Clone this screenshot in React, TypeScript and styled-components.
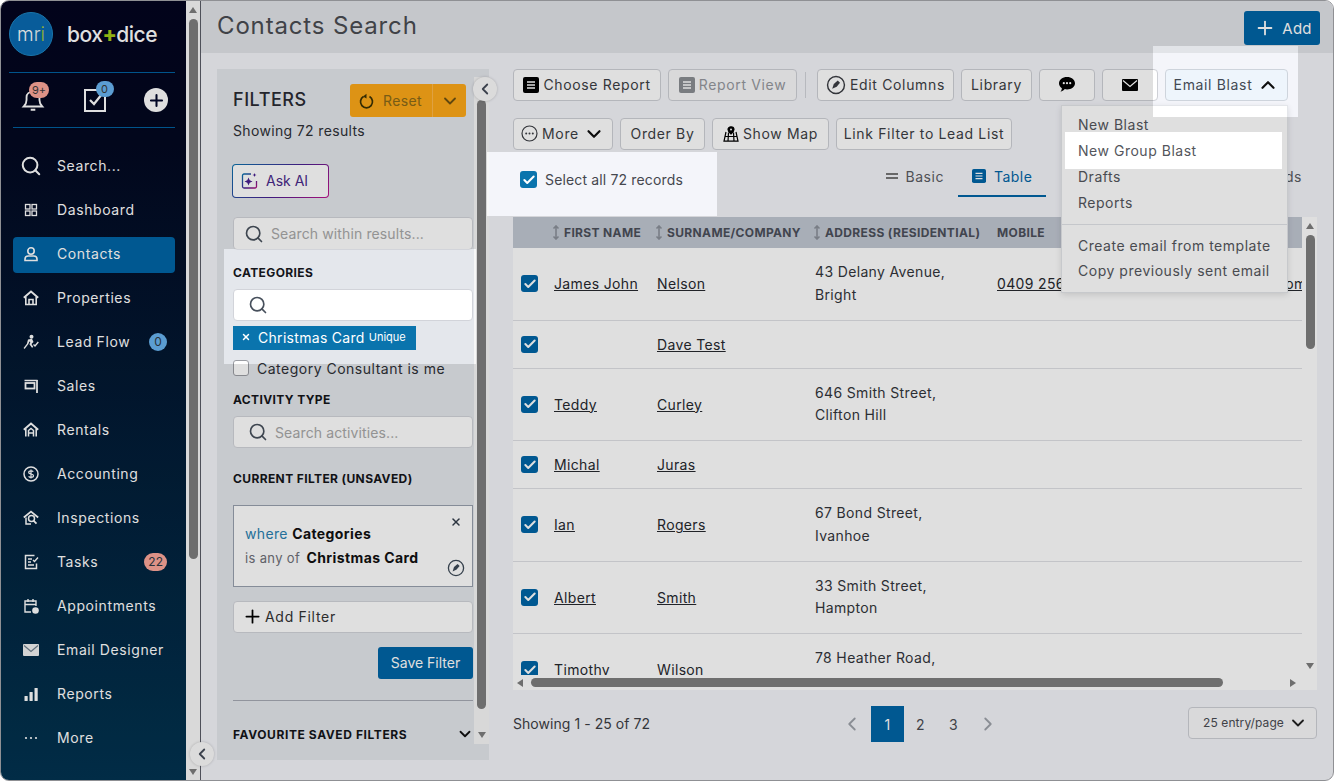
import React from 'react'
import styled, { createGlobalStyle } from 'styled-components'
import { Check, ChevronDown, ChevronLeft, ChevronRight, ChevronUp, Plus, Search, X } from 'lucide-react'

const PRIMARY = '#0165a6'
const TEXT = '#3c3e44'

const GlobalStyle = createGlobalStyle`
    html, body {
        margin: 0;
        padding: 0;
        background: #ffffff;
    }
    * {
        box-sizing: border-box;
    }
    body {
        font-family: Inter, "Open Sans", "Liberation Sans", sans-serif;
        font-size: 14px;
        letter-spacing: 0.35px;
        color: ${TEXT};
    }
`

type IconProps = { size?: number }

const ReportIcon = ({ size = 16, color = '#000' }: IconProps & { color?: string }) => (
    <svg width={size} height={size} viewBox="0 0 16 16">
        <rect width="16" height="16" rx="2" fill={color} />
        <path d="M4 5h8M4 8h8M4 11h8" stroke="#fff" strokeWidth="1.4" />
    </svg>
)

const EditCircleIcon = ({ size = 20 }: IconProps) => (
    <svg width={size} height={size} viewBox="0 0 18 18" fill="none" stroke="currentColor">
        <circle cx="9" cy="9" r="7.6" strokeWidth="1.3" />
        <path d="M5.6 12.4 7 8l3.6-3 2 2-3 3.6z" fill="currentColor" stroke="none" />
    </svg>
)

const ChatIcon = () => (
    <svg width="16" height="15" viewBox="0 0 16 15">
        <path d="M8 0c4.4 0 8 2.7 8 6.2s-3.6 6.2-8 6.2c-.8 0-1.500-.1-2.200-.3C4.600 13.300 3 14.500 1.500 14.700c.8-1 1.300-2.100 1.400-3.500C1.100 10 0 8.200 0 6.200 0 2.700 3.600 0 8 0z" fill="#000" />
        <circle cx="4.800" cy="6.200" r="1.100" fill="#fff" />
        <circle cx="8" cy="6.200" r="1.100" fill="#fff" />
        <circle cx="11.200" cy="6.200" r="1.100" fill="#fff" />
    </svg>
)

const MailIcon = ({ color = '#000', stroke = '#fff' }: { color?: string; stroke?: string }) => (
    <svg width="16" height="12" viewBox="0 0 16 12">
        <rect width="16" height="12" rx="1" fill={color} />
        <path d="M1 1.500 8 7.500l7-6" fill="none" stroke={stroke} strokeWidth="1.200" />
    </svg>
)

const MoreCircleIcon = () => (
    <svg width="17" height="17" viewBox="0 0 17 17" fill="none" stroke="currentColor">
        <circle cx="8.500" cy="8.500" r="7.500" strokeWidth="1.200" />
        <circle cx="5.200" cy="8.500" r="1" fill="currentColor" stroke="none" />
        <circle cx="8.500" cy="8.500" r="1" fill="currentColor" stroke="none" />
        <circle cx="11.800" cy="8.500" r="1" fill="currentColor" stroke="none" />
    </svg>
)

const MapIcon = () => (
    <svg width="16" height="16" viewBox="0 0 16 16" fill="none" stroke="#000" strokeWidth="1.200">
        <path d="M8 .8c1.800 0 3 1.200 3 2.800C11 5.400 8 8 8 8S5 5.400 5 3.600C5 2 6.200.8 8 .8z" fill="#000" />
        <circle cx="8" cy="3.500" r="1" fill="#fff" stroke="none" />
        <path d="M3 6 1 15.200h14L13 6M1.800 10.500h12.400M5.500 6.500 5 15.200M10.500 6.500l.5 8.700" />
    </svg>
)

const ResetIcon = () => (
    <svg width="15" height="16" viewBox="0 0 15 16" fill="none" stroke="#3c3204" strokeWidth="1.700">
        <path d="M4.500 3.600a6 6 0 1 0 6 0" />
        <path d="M7.500 0.800v4.600L4 3.400z" fill="#3c3204" stroke="none" />
    </svg>
)

const AiIcon = () => (
    <svg width="17" height="17" viewBox="0 0 17 17" fill="none">
        <defs>
            <linearGradient id="aiStroke" x1="0" y1="0" x2="1" y2="1">
                <stop offset="0" stopColor="#0a74ad" />
                <stop offset="0.6" stopColor="#4a1f8f" />
                <stop offset="1" stopColor="#b01280" />
            </linearGradient>
        </defs>
        <path d="M10 2H3a1.500 1.500 0 0 0-1.500 1.500v11A1.500 1.500 0 0 0 3 16h11a1.500 1.500 0 0 0 1.500-1.500V9" stroke="url(#aiStroke)" strokeWidth="1.300" />
        <path d="M7.500 5.500 8.700 8.300l2.800 1.200-2.800 1.200-1.200 2.800-1.200-2.800-2.800-1.200 2.800-1.200z" fill="#4a1f8f" />
        <path d="M13.500 1l.6 1.400 1.400.6-1.400.6-.6 1.400-.6-1.400-1.400-.6 1.400-.6z" fill="#4a1f8f" />
    </svg>
)

const SortIcon = () => (
    <svg width="8" height="15" viewBox="0 0 8 15" fill="none" stroke="#8b909a" strokeWidth="1.600">
        <path d="M4 1v13M1.500 3.500 4 1l2.500 2.500M1.500 11.500 4 14l2.500-2.500" />
    </svg>
)

const Glyph = ({ children }: { children: React.ReactNode }) => (
    <svg width="16" height="16" viewBox="0 0 16 16" fill="none" stroke="currentColor" strokeWidth="1.300">
        {children}
    </svg>
)

const navIcons: Record<string, React.ReactNode> = {
    dashboard: (
        <Glyph>
            <rect x="2.500" y="2.500" width="4.500" height="4.500" />
            <rect x="9" y="2.500" width="4.500" height="4.500" />
            <rect x="2.500" y="9" width="4.500" height="4.500" />
            <rect x="9" y="9" width="4.500" height="4.500" />
        </Glyph>
    ),
    contacts: (
        <Glyph>
            <circle cx="8" cy="5" r="3.200" strokeWidth="1.600" />
            <path d="M2 14.500v-1.500c0-1.800 1.500-3 3.200-3h5.600c1.700 0 3.200 1.200 3.200 3v1.500z" strokeWidth="1.600" />
        </Glyph>
    ),
    properties: (
        <Glyph>
            <path d="M.8 7.800 8 1.500l7.200 6.300" strokeWidth="1.900" />
            <path d="M2.800 6.800v7.700h10.400V6.800" strokeWidth="1.600" />
            <path d="M6 14.500V9.500h4v5" strokeWidth="1.600" />
        </Glyph>
    ),
    leadflow: (
        <svg width="16" height="16" viewBox="0 0 16 16" fill="currentColor">
            <circle cx="8.500" cy="2.800" r="2" />
            <path d="M5 5.500l4-.8 1.500 3.300-2 2 1.800 3-1.300.8-2.600-3.600 1-2.200-1-.5-1 2.500-3.800 5-1-1 3.300-4.300z" />
            <path d="M10.500 10.500 12 12l3.300-4" fill="none" stroke="currentColor" strokeWidth="1.400" />
        </svg>
    ),
    sales: (
        <svg width="16" height="16" viewBox="0 0 16 16" fill="none" stroke="currentColor">
            <path d="M1.500 2.500h13" strokeWidth="1.500" />
            <rect x="2.500" y="5" width="9" height="5.500" strokeWidth="1.800" />
            <path d="M14 2v13" strokeWidth="1.800" />
        </svg>
    ),
    rentals: (
        <Glyph>
            <path d="M.8 7.800 8 1.500l7.200 6.300" strokeWidth="1.900" />
            <path d="M2.800 6.800v7.700M13.200 6.800v7.700" strokeWidth="1.600" />
            <path d="M5.500 14.500V8.500L8 6.500l2.500 2v6M5.500 11h5" strokeWidth="1.500" />
        </Glyph>
    ),
    accounting: (
        <svg width="16" height="16" viewBox="0 0 16 16" fill="none" stroke="currentColor">
            <circle cx="8" cy="8" r="7" strokeWidth="1.500" />
            <path d="M10.300 5.700C9.800 5 9 4.800 8 4.800c-1.300 0-2.300.6-2.300 1.600C5.700 8.800 10.500 7.200 10.500 9.700c0 1-1.100 1.600-2.500 1.600-1 0-1.900-.3-2.400-1M8 3.500v9" strokeWidth="1.200" />
        </svg>
    ),
    inspections: (
        <Glyph>
            <path d="M.8 7.500 8 1.500l7.200 6" strokeWidth="1.700" />
            <path d="M3 7.500v6.500h5" strokeWidth="1.500" />
            <circle cx="8.500" cy="8.500" r="3" strokeWidth="1.500" />
            <path d="m10.500 10.700 3 3" strokeWidth="1.700" />
        </Glyph>
    ),
    tasks: (
        <Glyph>
            <path d="M13.500 9.500v5h-11v-13h9" strokeWidth="1.500" />
            <path d="M5 5h4M5 8h3M5 11h6" strokeWidth="1.400" />
            <path d="m10 6 1.500 1.500L15 3.500" strokeWidth="1.400" />
        </Glyph>
    ),
    appointments: (
        <svg width="16" height="16" viewBox="0 0 16 16" fill="none" stroke="currentColor" strokeWidth="1.400">
            <path d="M8 14H2V3h11v5M2 6.500h11M5 1v3M10 1v3" />
            <circle cx="12.500" cy="12.500" r="3.300" fill="currentColor" stroke="none" />
        </svg>
    ),
    email: <MailIcon color="#f2f2f2" stroke="#6f7f8c" />,
    reports: (
        <svg width="16" height="16" viewBox="0 0 16 16" fill="currentColor">
            <rect x="1.500" y="10" width="3.200" height="5" rx=".5" />
            <rect x="6.500" y="6" width="3.200" height="9" rx=".5" />
            <rect x="11.500" y="2" width="3.200" height="13" rx=".5" />
        </svg>
    ),
    more: (
        <svg width="16" height="16" viewBox="0 0 16 16" fill="currentColor">
            <circle cx="3" cy="8" r="1.100" />
            <circle cx="8" cy="8" r="1.100" />
            <circle cx="13" cy="8" r="1.100" />
        </svg>
    ),
}

const navItems = [
    { key: 'dashboard', label: 'Dashboard' },
    { key: 'contacts', label: 'Contacts', active: true },
    { key: 'properties', label: 'Properties' },
    { key: 'leadflow', label: 'Lead Flow', badge: '0', tone: 'blue' },
    { key: 'sales', label: 'Sales' },
    { key: 'rentals', label: 'Rentals' },
    { key: 'accounting', label: 'Accounting' },
    { key: 'inspections', label: 'Inspections' },
    { key: 'tasks', label: 'Tasks', badge: '22', tone: 'pink' },
    { key: 'appointments', label: 'Appointments' },
    { key: 'email', label: 'Email Designer' },
    { key: 'reports', label: 'Reports' },
    { key: 'more', label: 'More' },
]

const contacts = [
    { first: 'James John', last: 'Nelson', address: ['43 Delany Avenue,', 'Bright'], mobile: '0409 256 118', email: 'jnelson@email.com' },
    { first: '', last: 'Dave Test', address: [] },
    { first: 'Teddy', last: 'Curley', address: ['646 Smith Street,', 'Clifton Hill'] },
    { first: 'Michal', last: 'Juras', address: [] },
    { first: 'Ian', last: 'Rogers', address: ['67 Bond Street,', 'Ivanhoe'] },
    { first: 'Albert', last: 'Smith', address: ['33 Smith Street,', 'Hampton'] },
    { first: 'Timothy', last: 'Wilson', address: ['78 Heather Road,', 'Kew'] },
]

export default function App() {
    return (
        <>
            <GlobalStyle />
            <Window>
                <Sidebar>
                    <LogoRow>
                        <LogoBadge>
                            m<LogoR>r</LogoR><LogoI>i</LogoI>
                        </LogoBadge>
                        <Brand>box<BrandPlus>+</BrandPlus>dice</Brand>
                    </LogoRow>
                    <QuickRow>
                        <QuickItem>
                            <svg width="24" height="24" viewBox="0 0 24 26" fill="none" stroke="#fff" strokeWidth="2">
                                <path d="M2 20h20c-2-2-3-3.500-3-7V10c0-3.500-3-6-7-6s-7 2.500-7 6v3c0 3.500-1 5-3 7z" />
                                <path d="M9.500 23.500h5" strokeWidth="2.200" />
                            </svg>
                            <CountBadge $tone="pink" $left={8} $top={-6}>9+</CountBadge>
                        </QuickItem>
                        <QuickItem>
                            <svg width="24" height="24" viewBox="0 0 24 24" fill="none" stroke="#fff" strokeWidth="2">
                                <path d="M16 2H2v21h20V9" />
                                <path d="m7 12 4 4 8-10" strokeWidth="2.200" />
                            </svg>
                            <CountBadge $tone="blue" $left={13} $top={-7}>0</CountBadge>
                        </QuickItem>
                        <QuickAdd><Plus size={19} strokeWidth={2.6} /></QuickAdd>
                    </QuickRow>
                    <NavList>
                        <NavItem>
                            <NavIcon><Search size={22} strokeWidth={2.2} /></NavIcon>
                            Search...
                        </NavItem>
                        {navItems.map((item) => (
                            <NavItem key={item.key} $active={item.active}>
                                <NavIcon>{navIcons[item.key]}</NavIcon>
                                {item.label}
                                {item.badge && <NavBadge $tone={item.tone as string}>{item.badge}</NavBadge>}
                            </NavItem>
                        ))}
                    </NavList>
                </Sidebar>
                <Gutter>
                    <ArrowUp />
                    <GutterThumb />
                    <GutterSpacer />
                    <ArrowDown />
                </Gutter>
                <RoundToggle $left={189} $top={741}><ChevronLeft size={18} strokeWidth={2.4} /></RoundToggle>
                <Main>
                    <Header>
                        <Title>Contacts Search</Title>
                        <AddButton><Plus size={22} strokeWidth={2} /> Add</AddButton>
                    </Header>
                    <Content>
                        <FilterPanel>
                            <FilterHead>
                                <FilterTitle>FILTERS</FilterTitle>
                                <ResetSplit>
                                    <ResetMain><ResetIcon /> Reset</ResetMain>
                                    <ResetCaret><ChevronDown size={20} strokeWidth={2.2} /></ResetCaret>
                                </ResetSplit>
                            </FilterHead>
                            <ResultCount>Showing 72 results</ResultCount>
                            <AskAi><AiIcon /> Ask AI</AskAi>
                            <SearchBox $top={19} $height={33}>
                                <Search size={20} strokeWidth={2} />
                                <Placeholder>Search within results...</Placeholder>
                            </SearchBox>
                            <SectionLabel $top={15}>CATEGORIES</SectionLabel>
                            <SearchBox $top={9} $inset>
                                <Search size={20} strokeWidth={2} />
                            </SearchBox>
                            <Chip>
                                <X size={10} strokeWidth={3.5} />
                                <ChipLabel>Christmas Card</ChipLabel>
                                <ChipTag>Unique</ChipTag>
                            </Chip>
                            <CheckRow>
                                <EmptyBox />
                                Category Consultant is me
                            </CheckRow>
                            <SectionLabel $top={14}>ACTIVITY TYPE</SectionLabel>
                            <SearchBox $top={9} $inset>
                                <Search size={20} strokeWidth={2} />
                                <Placeholder>Search activities...</Placeholder>
                            </SearchBox>
                            <SectionLabel $top={23}>CURRENT FILTER (UNSAVED)</SectionLabel>
                            <FilterCard>
                                <FilterLine>
                                    <WhereWord>where</WhereWord> <strong>Categories</strong>
                                </FilterLine>
                                <FilterLine>
                                    <AnyWord>is any of</AnyWord> <strong>Christmas Card</strong>
                                </FilterLine>
                                <CardClose><X size={12} strokeWidth={3} /></CardClose>
                                <CardEdit><EditCircleIcon size={18} /></CardEdit>
                            </FilterCard>
                            <AddFilter><Plus size={21} strokeWidth={2} color="#000" /> Add Filter</AddFilter>
                            <SaveRow><SaveButton>Save Filter</SaveButton></SaveRow>
                            <PanelDivider />
                            <FavouriteRow>
                                <SectionLabel>FAVOURITE SAVED FILTERS</SectionLabel>
                                <ChevronDown size={18} strokeWidth={2.4} color="#111" />
                            </FavouriteRow>
                            <PanelTrack>
                                <PanelThumb />
                                <ArrowDown />
                            </PanelTrack>
                            <RoundToggle $left={256} $top={8}><ChevronLeft size={18} strokeWidth={2.4} /></RoundToggle>
                        </FilterPanel>
                        <Results>
                            <Toolbar>
                                <ToolButton $width={148}><ReportIcon /> Choose Report</ToolButton>
                                <ToolButton $width={129} $disabled><ReportIcon color="#8b8e93" /> Report View</ToolButton>
                                <ToolDivider />
                                <ToolButton $width={137}><EditCircleIcon /> Edit Columns</ToolButton>
                                <ToolButton $width={71}>Library</ToolButton>
                                <ToolButton $width={56}><ChatIcon /></ToolButton>
                                <ToolButton $width={56}><MailIcon /></ToolButton>
                                <BlastButton>Email Blast <ChevronUp size={22} strokeWidth={2.4} color="#111" /></BlastButton>
                            </Toolbar>
                            <Toolbar $top={17}>
                                <ToolButton $width={100}><MoreCircleIcon /> More <ChevronDown size={22} strokeWidth={2.4} color="#111" /></ToolButton>
                                <ToolButton $width={85}>Order By</ToolButton>
                                <ToolButton $width={117}><MapIcon /> Show Map</ToolButton>
                                <ToolButton $width={176}>Link Filter to Lead List</ToolButton>
                            </Toolbar>
                            <TabRow>
                                <SelectAll>
                                    <RowCheck $bright><Check size={14} strokeWidth={3.5} color="#fff" /></RowCheck>
                                    Select all 72 records
                                </SelectAll>
                                <Tabs>
                                    <Tab><BasicMark />Basic</Tab>
                                    <Tab $active><ReportIcon size={14} color={PRIMARY} />Table</Tab>
                                    <Tab $gap={200}>Cards</Tab>
                                </Tabs>
                            </TabRow>
                            <TableCard>
                                <TableViewport>
                                    <HeaderRow>
                                        <span />
                                        <HeadCell><SortIcon /> FIRST NAME</HeadCell>
                                        <HeadCell><SortIcon /> SURNAME/COMPANY</HeadCell>
                                        <HeadCell><SortIcon /> ADDRESS (RESIDENTIAL)</HeadCell>
                                        <HeadCell>MOBILE</HeadCell>
                                        <HeadCell>EMAIL</HeadCell>
                                    </HeaderRow>
                                    {contacts.map((c) => (
                                        <BodyRow key={c.last}>
                                            <RowCheck><Check size={14} strokeWidth={3.5} color="#fff" /></RowCheck>
                                            <LinkText>{c.first}</LinkText>
                                            <LinkText>{c.last}</LinkText>
                                            <Address>{c.address.map((l) => <div key={l}>{l}</div>)}</Address>
                                            <LinkText>{c.mobile}</LinkText>
                                            <LinkText>{c.email}</LinkText>
                                        </BodyRow>
                                    ))}
                                </TableViewport>
                                <TableVTrack>
                                    <ArrowUp />
                                    <TableVThumb />
                                    <GutterSpacer />
                                    <ArrowDown />
                                </TableVTrack>
                                <TableHTrack>
                                    <ArrowLeft />
                                    <TableHThumb />
                                    <GutterSpacer />
                                    <ArrowRight />
                                </TableHTrack>
                            </TableCard>
                            <Footer>
                                <ShowingText>Showing 1 - 25 of 72</ShowingText>
                                <Pager>
                                    <PagerArrow $prev><ChevronLeft size={22} strokeWidth={2} /></PagerArrow>
                                    <PageButton $active>1</PageButton>
                                    <PageButton>2</PageButton>
                                    <PageButton>3</PageButton>
                                    <PagerArrow><ChevronRight size={22} strokeWidth={2} /></PagerArrow>
                                </Pager>
                                <PageSize>25 entry/page <ChevronDown size={20} strokeWidth={2.2} color="#222" /></PageSize>
                            </Footer>
                        </Results>
                    </Content>
                </Main>
                <BlastMenu>
                    <MenuItem>New Blast</MenuItem>
                    <MenuItem>New Group Blast</MenuItem>
                    <MenuItem>Drafts</MenuItem>
                    <MenuItem>Reports</MenuItem>
                    <MenuDivider />
                    <MenuItem $tight>Create email from template</MenuItem>
                    <MenuItem $tight>Copy previously sent email</MenuItem>
                </BlastMenu>
                <DimLayer />
            </Window>
        </>
    )
}

const Window = styled.div`
    position: relative;
    display: flex;
    width: 1334px;
    height: 781px;
    overflow: hidden;
    background: #f4f5fa;
    border-radius: 9px;
    border: 1px solid #8f9094;
`

// page tour dimming: dark everywhere except the cut out steps
const DimLayer = styled.div`
    position: absolute;
    left: -1px;
    top: -1px;
    z-index: 10;
    width: 1334px;
    height: 781px;
    background: rgba(0, 0, 0, 0.125);
    pointer-events: none;
    clip-path: path(evenodd, 'M0 0H1334V781H0Z M1153 46H1298V117H1153Z M487 152H717V216H487Z M224 249H476V364H224Z M1065 132H1282V169H1065Z');
`

const Sidebar = styled.aside`
    flex: 0 0 185px;
    display: flex;
    flex-direction: column;
    padding: 0 11px 0 12px;
    color: #fff;
    letter-spacing: 0.6px;
    background: linear-gradient(180deg, #03041f 0%, #03071f 15%, #023350 100%);
`

const LogoRow = styled.div`
    flex: 0 0 72px;
    display: flex;
    align-items: center;
    gap: 14px;
    margin-left: -4px;
    padding-bottom: 5px;
    border-bottom: 1px solid #01609f;
`

const LogoBadge = styled.div`
    width: 44px;
    height: 44px;
    border-radius: 50%;
    display: flex;
    align-items: center;
    justify-content: center;
    background: #0a6ab0;
    border: 1px solid #1d86c4;
    font-size: 19px;
    font-weight: 300;
    letter-spacing: 0;
    color: #fff;
`

const LogoR = styled.span`
    color: #e6f2f6;
`

const LogoI = styled.span`
    color: #a9cc3c;
`

const Brand = styled.div`
    font-size: 21px;
    font-weight: 500;
    letter-spacing: -0.5px;
`

const BrandPlus = styled.span`
    color: #a4cb16;
    font-weight: 800;
`

const QuickRow = styled.div`
    flex: 0 0 55px;
    display: flex;
    align-items: center;
    padding-left: 8px;
    padding-right: 7px;
    justify-content: space-between;
    border-bottom: 1px solid #01609f;
`

const QuickItem = styled.div`
    position: relative;
    display: flex;
    width: 24px;
`

const CountBadge = styled.span<{ $tone: string; $left: number; $top: number }>`
    position: absolute;
    left: ${(p) => p.$left}px;
    top: ${(p) => p.$top}px;
    min-width: 18px;
    height: 16px;
    padding: 0 3px;
    border-radius: 9px;
    display: flex;
    align-items: center;
    justify-content: center;
    font-size: 11px;
    letter-spacing: 0;
    color: #3b3b3b;
    background: ${(p) => (p.$tone === 'pink' ? '#fda79b' : '#69b4f0')};
`

const QuickAdd = styled.div`
    width: 24px;
    height: 24px;
    border-radius: 50%;
    display: flex;
    align-items: center;
    justify-content: center;
    background: #fff;
    color: #02072a;
`

const NavList = styled.nav`
    display: flex;
    flex-direction: column;
    gap: 8px;
    margin-top: 21px;
`

const NavItem = styled.div<{ $active?: boolean }>`
    position: relative;
    height: 36px;
    display: flex;
    align-items: center;
    padding: 0 8px 3px 0;
    border-radius: 4px;
    background: ${(p) => (p.$active ? PRIMARY : 'transparent')};
`

const NavIcon = styled.span`
    flex: 0 0 36px;
    margin-right: 8px;
    display: flex;
    justify-content: center;
`

const NavBadge = styled.span<{ $tone: string }>`
    margin-left: auto;
    min-width: 18px;
    height: 18px;
    padding: 0 4px;
    border-radius: 9px;
    display: flex;
    align-items: center;
    justify-content: center;
    font-size: 12px;
    letter-spacing: 0;
    color: #2e3a44;
    background: ${(p) => (p.$tone === 'pink' ? '#fda79b' : '#69b4f0')};
`

const Gutter = styled.div`
    flex: 0 0 15px;
    display: flex;
    flex-direction: column;
    align-items: center;
    background: #f8f8f8;
    border-right: 1px solid #5a5c66;
    padding: 6px 0 5px 0;
`

const ArrowUp = styled.span`
    width: 0;
    height: 0;
    flex: none;
    border: 4px solid transparent;
    border-top: 0;
    border-bottom: 6px solid #7e7e7e;
`

const ArrowDown = styled(ArrowUp)`
    transform: rotate(180deg);
`

const ArrowLeft = styled.span`
    width: 0;
    height: 0;
    flex: none;
    border: 4px solid transparent;
    border-left: 0;
    border-right: 6px solid #7e7e7e;
`

const ArrowRight = styled(ArrowLeft)`
    transform: rotate(180deg);
`

const GutterThumb = styled.span`
    width: 9px;
    height: 540px;
    margin-top: 6px;
    border-radius: 5px;
    background: #7e7e7e;
`

const GutterSpacer = styled.span`
    flex: 1;
`

const RoundToggle = styled.button<{ $left: number; $top: number }>`
    position: absolute;
    left: ${(p) => p.$left}px;
    top: ${(p) => p.$top}px;
    z-index: 3;
    width: 24px;
    height: 24px;
    padding: 0;
    border: 0;
    border-radius: 50%;
    display: flex;
    align-items: center;
    justify-content: center;
    color: #444b58;
    background: #fbfbfb;
    box-shadow: 0 0 3px rgba(0, 0, 0, 0.2);
`

const Main = styled.main`
    flex: 1;
    min-width: 0;
    display: flex;
    flex-direction: column;
`

const Header = styled.header`
    flex: 0 0 52px;
    display: flex;
    align-items: center;
    justify-content: space-between;
    padding: 0 13px 0 16px;
    background: #e2e4e8;
`

const Title = styled.h1`
    margin: 0 0 4px;
    font-size: 24px;
    font-weight: 400;
    letter-spacing: 0.85px;
    color: #4a4c52;
`

const AddButton = styled.button`
    width: 76px;
    height: 34px;
    margin-top: 2px;
    display: flex;
    align-items: center;
    justify-content: center;
    gap: 6px;
    padding: 0 0 0 2px;
    border: 0;
    border-radius: 3px;
    font: inherit;
    font-size: 15px;
    letter-spacing: 0.2px;
    color: #fff;
    background: ${PRIMARY};
`

const Content = styled.div`
    flex: 1;
    display: flex;
    gap: 24px;
    padding: 16px 16px 0 16px;
`

const FilterPanel = styled.section`
    position: relative;
    flex: 0 0 272px;
    min-width: 0;
    height: 691px;
    padding: 15px 16px 0;
    background: #e4e7ec;
`

const FilterHead = styled.div`
    display: flex;
    align-items: center;
    justify-content: space-between;
    width: 233px;
`

const FilterTitle = styled.h2`
    margin: 0 0 2px;
    font-size: 18px;
    font-weight: 500;
    letter-spacing: 0.55px;
    color: #2a2b33;
`

const ResetSplit = styled.div`
    display: flex;
    width: 116px;
    height: 33px;
    border-radius: 3px;
    overflow: hidden;
    background: #fda818;
    color: #8a6a1a;
`

const ResetMain = styled.span`
    flex: 1;
    display: flex;
    align-items: center;
    gap: 9px;
    padding-left: 9px;
    border-right: 1px solid #ffb94b;
`

const ResetCaret = styled.span`
    flex: 0 0 33px;
    display: flex;
    align-items: center;
    justify-content: center;
    color: #6e5212;
`

const ResultCount = styled.div`
    margin-top: 4px;
    line-height: 20px;
    color: #2e3036;
`

const AskAi = styled.button`
    margin-top: 23px;
    margin-left: -1px;
    width: 97px;
    height: 34px;
    display: flex;
    align-items: center;
    gap: 8px;
    padding: 0 0 2px 8px;
    border: 1px solid transparent;
    border-radius: 4px;
    font: inherit;
    color: #4a2a8a;
    background:
        linear-gradient(#fff, #fff) padding-box,
        linear-gradient(135deg, #0a74ad, #4a1f8f 55%, #c0128c) border-box;
`

const SearchBox = styled.div<{ $top: number; $height?: number; $inset?: boolean }>`
    margin-top: ${(p) => p.$top}px;
    width: 240px;
    height: ${(p) => p.$height ?? 32}px;
    display: flex;
    align-items: center;
    gap: 7px;
    padding-left: ${(p) => (p.$inset ? 14 : 10)}px;
    border: 1px solid #d2d4da;
    border-radius: 4px;
    color: #47505c;
    background: #fff;
`

const Placeholder = styled.span`
    letter-spacing: 0.12px;
    color: #a8a8a8;
`

const SectionLabel = styled.div<{ $top?: number }>`
    margin-top: ${(p) => p.$top ?? 0}px;
    font-size: 12px;
    font-weight: 700;
    line-height: 15px;
    letter-spacing: 0.38px;
    color: #14151a;
`

const Chip = styled.div`
    margin-top: 5px;
    width: 183px;
    height: 24px;
    display: flex;
    align-items: center;
    padding: 0 0 2px 8px;
    color: #fff;
    background: #0a74ad;
`

const ChipLabel = styled.span`
    margin-left: 7px;
    letter-spacing: 0.3px;
    white-space: nowrap;
`

const ChipTag = styled.span`
    margin-left: 4px;
    font-size: 11px;
    letter-spacing: 0;
`

const CheckRow = styled.div`
    margin-top: 8px;
    height: 20px;
    display: flex;
    align-items: center;
    gap: 8px;
    letter-spacing: 0.5px;
    white-space: nowrap;
    color: #2e3036;
`

const EmptyBox = styled.span`
    width: 16px;
    height: 16px;
    border: 1px solid #9b9da3;
    border-radius: 3px;
    background: #fff;
`

const FilterCard = styled.div`
    position: relative;
    margin-top: 19px;
    width: 240px;
    height: 82px;
    padding: 16px 11px 0;
    border: 1px solid #98a0ae;
    background: #fff;
`

const FilterLine = styled.div`
    line-height: 24px;
    white-space: nowrap;
    color: #111;

    strong {
        font-weight: 700;
        letter-spacing: 0.4px;
    }
`

const WhereWord = styled.span`
    color: #2a7fb0;
`

const AnyWord = styled.span`
    margin-right: 2px;
    font-size: 13px;
    color: #6e7078;
`

const CardClose = styled.span`
    position: absolute;
    top: 10px;
    right: 10px;
    display: flex;
    color: #333d4a;
`

const CardEdit = styled.span`
    position: absolute;
    right: 7px;
    bottom: 9px;
    display: flex;
    color: #3d4a57;
`

const AddFilter = styled.button`
    margin-top: 14px;
    width: 240px;
    height: 32px;
    display: flex;
    align-items: center;
    gap: 2px;
    padding: 0 0 1px 8px;
    border: 1px solid #d2d4da;
    border-radius: 4px;
    font: inherit;
    letter-spacing: 0.7px;
    color: #333;
    background: #fff;
`

const SaveRow = styled.div`
    margin-top: 14px;
    width: 240px;
    display: flex;
    justify-content: flex-end;
`

const SaveButton = styled.button`
    width: 95px;
    height: 32px;
    padding: 0 0 2px;
    border: 0;
    border-radius: 3px;
    font: inherit;
    color: #fff;
    background: ${PRIMARY};
`

const PanelDivider = styled.div`
    margin-top: 21px;
    width: 240px;
    border-top: 1px solid #a6aab4;
`

const FavouriteRow = styled.div`
    margin-top: 24px;
    width: 241px;
    display: flex;
    align-items: center;
    justify-content: space-between;
    letter-spacing: 0.6px;

    & > div {
        letter-spacing: inherit;
    }
`

const PanelTrack = styled.div`
    position: absolute;
    top: 8px;
    right: 0;
    width: 15px;
    height: 667px;
    display: flex;
    flex-direction: column;
    align-items: center;
    justify-content: space-between;
    padding: 23px 0 6px;
    background: #f7f7f7;
`

const PanelThumb = styled.span`
    width: 9px;
    height: 609px;
    border-radius: 5px;
    background: #7e7e7e;
`

const Results = styled.section`
    flex: 1;
    min-width: 0;
`

const Toolbar = styled.div<{ $top?: number }>`
    display: flex;
    align-items: center;
    gap: 7px;
    margin-top: ${(p) => p.$top ?? 0}px;
`

const ToolButton = styled.button<{ $width: number; $disabled?: boolean }>`
    width: ${(p) => p.$width}px;
    height: 32px;
    flex: none;
    display: flex;
    align-items: center;
    justify-content: center;
    gap: 4px;
    padding: 0 0 1px;
    border: 1px solid #ced0d6;
    border-radius: 4px;
    font: inherit;
    letter-spacing: 0.65px;
    white-space: nowrap;
    color: ${(p) => (p.$disabled ? '#96989e' : TEXT)};
    background: ${(p) => (p.$disabled ? '#f8f8fa' : '#fff')};
`

const ToolDivider = styled.span`
    width: 1px;
    height: 26px;
    margin: 0 4px 0 1px;
    background: #d2d4da;
`

const BlastButton = styled.button`
    width: 123px;
    height: 32px;
    display: flex;
    align-items: center;
    justify-content: center;
    gap: 5px;
    padding: 0 0 1px;
    border: 1px solid #ced4dc;
    border-radius: 4px;
    font: inherit;
    letter-spacing: 0.65px;
    white-space: nowrap;
    color: #434a54;
    background: #eef5fc;
`

const TabRow = styled.div`
    height: 67px;
    display: flex;
    align-items: flex-start;
    justify-content: space-between;
    padding: 0 15px 0 7px;
`

const SelectAll = styled.label`
    margin-top: 21px;
    display: flex;
    align-items: center;
    gap: 8px;
    letter-spacing: 0.15px;
    color: #45474e;
`

const Tabs = styled.div`
    display: flex;
    margin-top: 9px;
`

const Tab = styled.div<{ $active?: boolean; $gap?: number }>`
    height: 38px;
    margin-left: ${(p) => p.$gap ?? 0}px;
    display: flex;
    align-items: center;
    gap: 8px;
    padding: 0 14px 2px;
    border-bottom: 2px solid ${(p) => (p.$active ? PRIMARY : 'transparent')};
    letter-spacing: 0.5px;
    color: ${(p) => (p.$active ? PRIMARY : '#5a5c62')};

    &:last-child {
        padding-right: 0;
    }
`

const BasicMark = styled.span`
    width: 12px;
    height: 6px;
    border-top: 2px solid #777;
    border-bottom: 2px solid #777;
`

const TableCard = styled.div`
    position: relative;
    width: 804px;
    height: 473px;
    background: #fff;
`

const TableViewport = styled.div`
    width: 789px;
    height: 458px;
    overflow: hidden;
`

const HeaderRow = styled.div`
    width: 1100px;
    height: 31px;
    display: grid;
    grid-template-columns: 39px 103px 158px 184px 175px 1fr;
    align-items: center;
    background: #c1c7d2;
`

const HeadCell = styled.div`
    display: flex;
    align-items: center;
    gap: 4px;
    font-size: 12px;
    font-weight: 700;
    letter-spacing: 0.35px;
    white-space: nowrap;
    color: #4b4f5a;
`

const BodyRow = styled.div`
    width: 1100px;
    min-height: 48px;
    display: grid;
    grid-template-columns: 33px 103px 158px 182px 175px 1fr;
    align-items: center;
    padding: 13px 0 13px 8px;
    border-bottom: 1px solid #dfe0e5;
`

const RowCheck = styled.span<{ $bright?: boolean }>`
    width: 17px;
    height: 17px;
    border-radius: 3px;
    display: flex;
    align-items: center;
    justify-content: center;
    background: ${(p) => (p.$bright ? '#0a74ad' : PRIMARY)};
`

const LinkText = styled.a`
    justify-self: start;
    text-decoration: underline;
    white-space: nowrap;
    color: #26282e;
`

const Address = styled.div`
    line-height: 22.75px;
    color: #33353b;
`

const TableVTrack = styled.div`
    position: absolute;
    top: 6px;
    right: 1px;
    width: 12px;
    height: 446px;
    display: flex;
    flex-direction: column;
    align-items: center;
`

const TableVThumb = styled.span`
    width: 9px;
    height: 114px;
    margin-top: 6px;
    border-radius: 5px;
    background: #7e7e7e;
`

const TableHTrack = styled.div`
    position: absolute;
    left: 4px;
    right: 21px;
    bottom: 2px;
    height: 11px;
    display: flex;
    align-items: center;
`

const TableHThumb = styled.span`
    width: 692px;
    height: 9px;
    margin-left: 8px;
    border-radius: 5px;
    background: #7e7e7e;
`

const Footer = styled.div`
    margin-top: 16px;
    height: 36px;
    display: grid;
    grid-template-columns: 325px auto 1fr;
    align-items: center;
`

const ShowingText = styled.span`
    padding-bottom: 2px;
    letter-spacing: 0.05px;
`

const Pager = styled.div`
    display: flex;
    align-items: center;
`

const PagerArrow = styled.span<{ $prev?: boolean }>`
    width: ${(p) => (p.$prev ? 28 : 36)}px;
    margin-right: ${(p) => (p.$prev ? 5 : 0)}px;
    display: flex;
    justify-content: center;
    color: #9ea2aa;
`

const PageButton = styled.span<{ $active?: boolean }>`
    width: 33px;
    height: 36px;
    display: flex;
    align-items: center;
    justify-content: center;
    color: ${(p) => (p.$active ? '#fff' : '#4a4c52')};
    background: ${(p) => (p.$active ? PRIMARY : 'transparent')};
`

const PageSize = styled.div`
    justify-self: end;
    width: 129px;
    height: 32px;
    margin-bottom: 3px;
    display: flex;
    align-items: center;
    justify-content: space-between;
    padding: 0 8px 0 14px;
    border: 1px solid #ced0d6;
    border-radius: 4px;
    font-size: 12px;
    letter-spacing: 0.1px;
    color: #4a4c52;
    background: #f8f8fa;
`

const BlastMenu = styled.div`
    position: absolute;
    left: 1060px;
    top: 104px;
    z-index: 4;
    width: 227px;
    height: 188px;
    padding: 5px 0 0;
    border: 1px solid #e4e6ea;
    letter-spacing: 0.52px;
    background: #fff;
    box-shadow: 0 2px 6px rgba(0, 0, 0, 0.12);
`

const MenuItem = styled.div<{ $tight?: boolean }>`
    height: ${(p) => (p.$tight ? 25 : 26)}px;
    display: flex;
    align-items: center;
    padding-left: 16px;
    white-space: nowrap;
    color: #54565c;
`

const MenuDivider = styled.div`
    margin: 9px 0 8px;
    border-top: 1px solid #e2e4e9;
`
